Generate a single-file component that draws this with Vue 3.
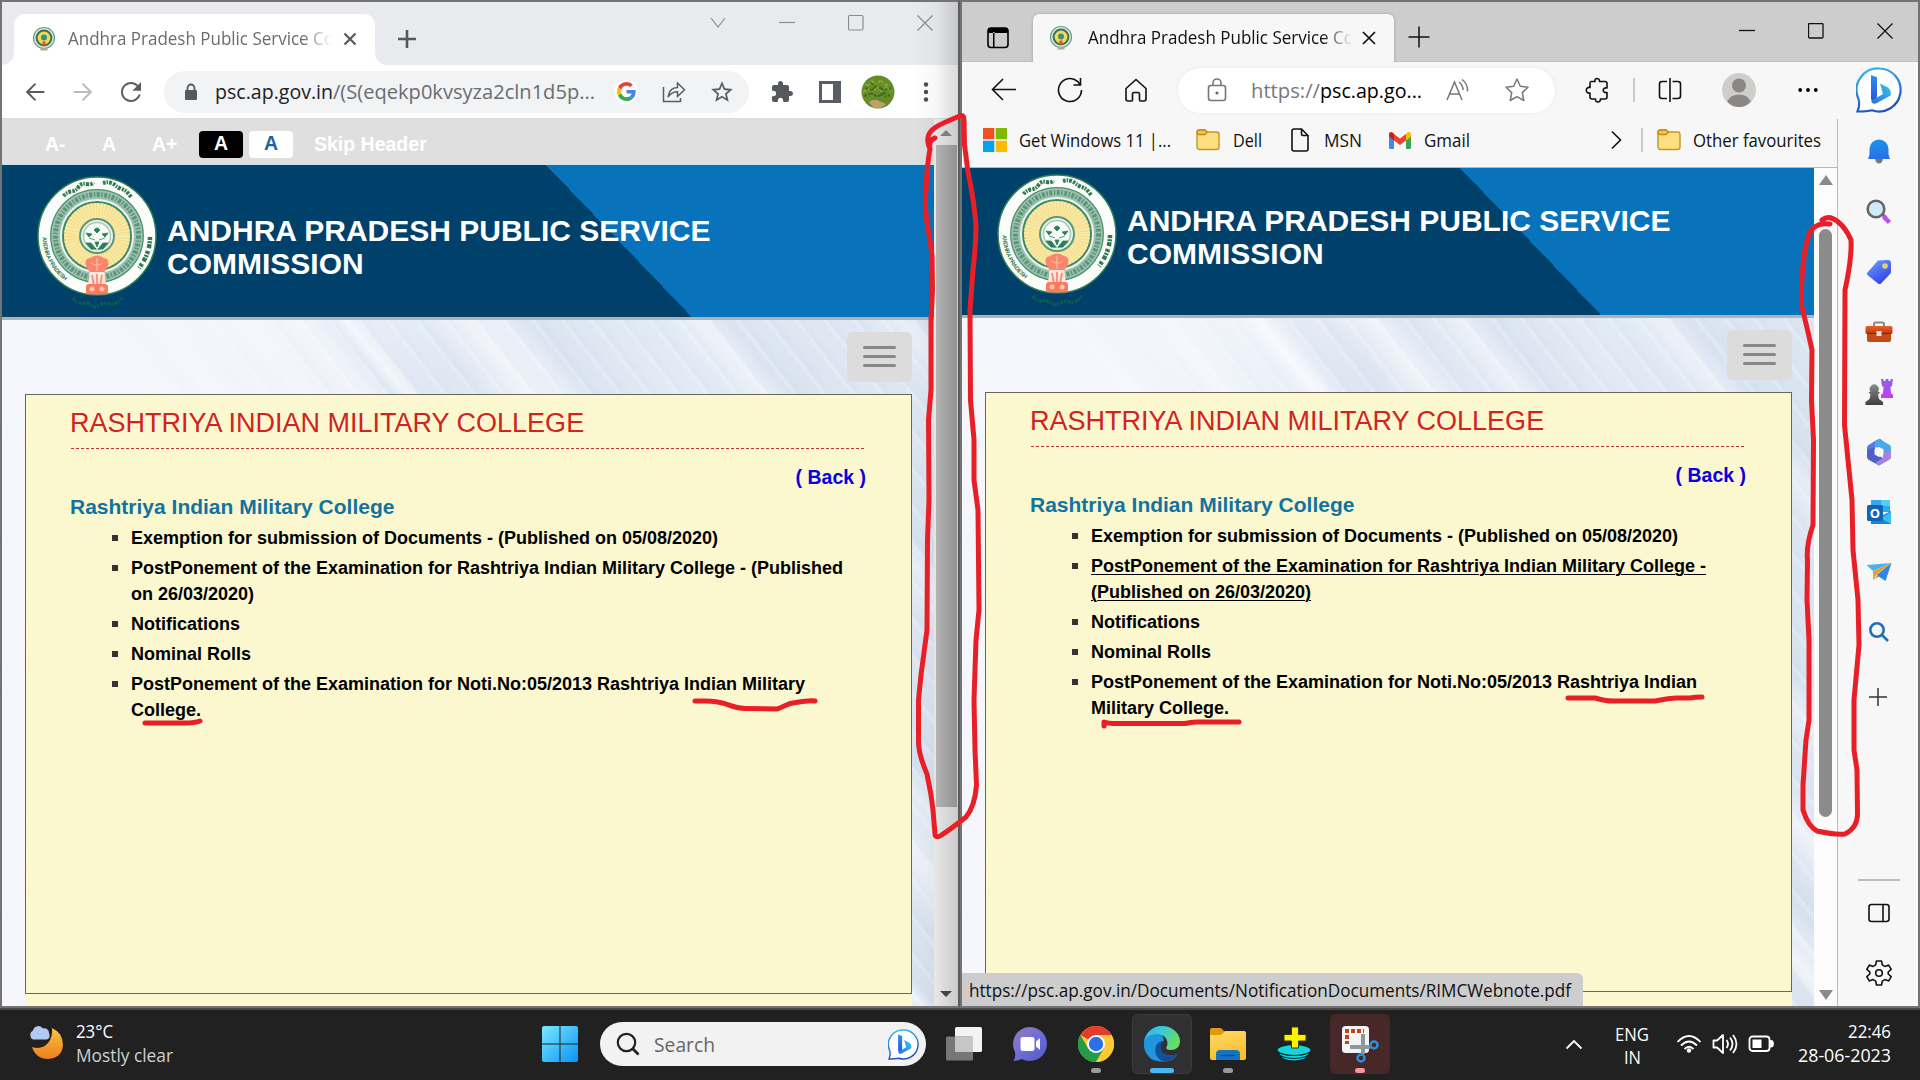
<script setup>
import { h } from 'vue'

// One line of text stretched to a fixed advance width
const Fit = (p) =>
  h('svg', { width: p.w, height: p.s * 1.5, overflow: 'visible' }, [
    h('text', { x: 0, y: p.s * 1.1, 'font-size': p.s, fill: 'currentColor', textLength: p.w, lengthAdjust: 'spacingAndGlyphs' }, p.t)
  ])
Fit.props = ['t', 'w', 's']

const wins = [
  {
    id: 'chrome',
    items: [
      ['Exemption for submission of Documents - (Published on 05/08/2020)'],
      ['PostPonement of the Examination for Rashtriya Indian Military College - (Published', 'on 26/03/2020)'],
      ['Notifications'],
      ['Nominal Rolls'],
      ['PostPonement of the Examination for Noti.No:05/2013 Rashtriya Indian Military', 'College.']
    ]
  },
  {
    id: 'edge',
    hover: 1,
    items: [
      ['Exemption for submission of Documents - (Published on 05/08/2020)'],
      ['PostPonement of the Examination for Rashtriya Indian Military College -', '(Published on 26/03/2020)'],
      ['Notifications'],
      ['Nominal Rolls'],
      ['PostPonement of the Examination for Noti.No:05/2013 Rashtriya Indian', 'Military College.']
    ]
  }
]
</script>

<template>
  <div class="desktop">
    <svg class="defs" width="0" height="0">
      <defs>
        <linearGradient id="gBing" x1="0" y1="0" x2="0.3" y2="1"><stop offset="0" stop-color="#35c0ef" /><stop offset="1" stop-color="#2150c4" /></linearGradient>
        <linearGradient id="gB2" x1="0" y1="0" x2="0" y2="1"><stop offset="0" stop-color="#2f8df0" /><stop offset="1" stop-color="#2456d8" /></linearGradient>
        <linearGradient id="gB3" x1="1" y1="0" x2="0" y2="1"><stop offset="0" stop-color="#35c8e8" /><stop offset="1" stop-color="#2a6fe0" /></linearGradient>
        <linearGradient id="gWin" gradientUnits="userSpaceOnUse" x1="0" y1="0" x2="36" y2="36"><stop offset="0" stop-color="#7be9ff" /><stop offset="1" stop-color="#0a93f5" /></linearGradient>
        <linearGradient id="gMoon" x1="0" y1="0" x2="0" y2="1"><stop offset="0" stop-color="#f6c443" /><stop offset="1" stop-color="#f07f1c" /></linearGradient>
        <linearGradient id="gTag" x1="0" y1="0" x2="0.6" y2="1"><stop offset="0" stop-color="#6ba6f5" /><stop offset="1" stop-color="#3341f0" /></linearGradient>
        <linearGradient id="gChat" x1="0" y1="0" x2="1" y2="1"><stop offset="0" stop-color="#9c78c0" /><stop offset="0.5" stop-color="#6c6fd8" /><stop offset="1" stop-color="#5157c4" /></linearGradient>
        <linearGradient id="gEdge" x1="0" y1="0.2" x2="1" y2="0.5"><stop offset="0" stop-color="#31b4ea" /><stop offset="0.5" stop-color="#3fcbd0" /><stop offset="1" stop-color="#6bdf55" /></linearGradient>
        <linearGradient id="gFold" x1="0" y1="0" x2="0.3" y2="1"><stop offset="0" stop-color="#ffd968" /><stop offset="1" stop-color="#f9bf2c" /></linearGradient>
        <linearGradient id="gBox" x1="0" y1="0" x2="0" y2="1"><stop offset="0" stop-color="#e8612c" /><stop offset="1" stop-color="#b93a0c" /></linearGradient>
        <linearGradient id="gRook" x1="0" y1="0" x2="0" y2="1"><stop offset="0" stop-color="#8d62e8" /><stop offset="1" stop-color="#c43cf5" /></linearGradient>
        <linearGradient id="gPawn" x1="0" y1="0" x2="0" y2="1"><stop offset="0" stop-color="#8a8a8a" /><stop offset="1" stop-color="#3f3f3f" /></linearGradient>
        <linearGradient id="gBell" x1="0" y1="0" x2="0" y2="1"><stop offset="0" stop-color="#1b93ea" /><stop offset="1" stop-color="#2b6fe8" /></linearGradient>
        <symbol id="seal" viewBox="0 0 124 138">
          <circle cx="62" cy="62" r="59" fill="#fbfdfb" stroke="#2c7f57" stroke-width="1.500" />
          <circle cx="62" cy="62" r="41" fill="none" stroke="#9dc1ae" stroke-width="11" />
          <circle cx="62" cy="62" r="46.300" fill="none" stroke="#4c9070" stroke-width="1.200" />
          <circle cx="62" cy="62" r="41.500" fill="none" stroke="#5b977a" stroke-width="5" stroke-dasharray="3 1.500 1.500 1.500" />
          <circle cx="62" cy="62" r="36" fill="none" stroke="#eef5f0" stroke-width="2" />
          <circle cx="62" cy="62" r="34" fill="#f6e08c" stroke="#3f8a66" stroke-width="2" />
          <circle cx="62" cy="62" r="25" fill="none" stroke="#fbf0bd" stroke-width="16" stroke-dasharray="1.100 1.700" opacity="0.8" />
          <circle cx="62" cy="62" r="17" fill="#e9f3ec" stroke="#5b997a" stroke-width="2" />
          <circle cx="62" cy="62" r="13.500" fill="#f7fbf8" stroke="#a8c9b5" stroke-width="1.500" />
          <path d="M59 56q3-4 6 0l-3 3zM51 59l6 1-3 3zM73 59l-6 1 3 3zM54 64l6 2M70 64l-6 2M51 69h5l5 6h-5zM73 69h-5l-5 6h5zM60 68h4l-2 5z" fill="#2f7d57" stroke="#2f7d57" stroke-width=".8" />
          <path d="M28.500 22q3.500-4 8-4.500t7-4.500 8-3 7-1.500M68 9q7-2 12 2t8 4.500 8 7.500" fill="none" stroke="#327a53" stroke-width="4" stroke-dasharray="2.500 1 1.500 1 3 1.200" />
          <path id="sealArc" d="M7.500 63A54.500 54.500 0 0 0 34 109" fill="none" />
          <text font-size="5.800" font-weight="bold" fill="#2f7a54" font-family="Liberation Sans, sans-serif"><textPath href="#sealArc" textLength="51">ANDHRA PRADESH</textPath></text>
          <path d="M115 63q0 17-11 31" fill="none" stroke="#327a53" stroke-width="4.500" stroke-dasharray="3 1.200 2 1 4 3" />
          <path d="M51 92q-2-7 4-8 7-5 14 0 6 1 4 8l-4 7H55z" fill="#fb866c" />
          <path d="M54.500 98h15l2 18h-19z" fill="#ffe6de" />
          <path d="M57 101l2 11M62 100v12M67 101l-2 11" stroke="#fb8c73" stroke-width="1.800" />
          <rect x="51" y="110" width="22" height="10.500" rx="3" fill="#fc7a5c" /><circle cx="57" cy="115" r="2.500" fill="#ffc6b8" /><circle cx="67" cy="115" r="2.500" fill="#ffc6b8" />
          <path d="M56 89q6 4 12 0M62 84v13" stroke="#ffb3a1" stroke-width="1.300" fill="none" />
          <path d="M38 124q4 6 9 5t9 2 9 0 10-1 12-6" fill="none" stroke="#0d5c4c" stroke-width="3.200" stroke-dasharray="3 1 2 1.500" />
        </symbol>
        <symbol id="seal-mini" viewBox="0 0 24 26">
          <circle cx="12" cy="12" r="10.500" fill="#dfeae2" stroke="#6c9d82" stroke-width="1.200" />
          <circle cx="12" cy="12" r="7.400" fill="#f0d95c" stroke="#3a7452" stroke-width="2" />
          <circle cx="12" cy="11.500" r="3" fill="#3f8f78" />
          <path d="M10.500 15.500h3v4h-3z" fill="#f04a22" /><path d="M8.500 22h7v2.500h-7z" fill="#b3a894" />
        </symbol>
        <symbol id="bing" viewBox="0 0 46 46">
          <path d="M23 1.500a21.500 21.500 0 1 1-7 41.800C11 44.500 6 44.500 1.500 44.500c2-5 2.500-8 .800-13A21.500 21.500 0 0 1 23 1.500z" fill="#fff" stroke="url(#gBing)" stroke-width="2.200" />
          <path d="M15 8l6 2.300V29l-1 7-5-3.500z" fill="url(#gB2)" />
          <path d="M24 16.500l7 3.500c3.500 2 4.500 5 3.500 8.500L21 36c-3 1.500-5 .5-6-2l12-7z" fill="url(#gB3)" />
        </symbol>
        <symbol id="folder" viewBox="0 0 24 24">
          <path d="M1 6v13a2.500 2.500 0 0 0 2.500 2.500h17A2.500 2.500 0 0 0 23 19V6.500A2.500 2.500 0 0 0 20.500 4H11L9 2H3a2 2 0 0 0-2 2z" fill="#fddf82" stroke="#c19623" stroke-width="1.400" />
          <path d="M1 5a2.500 2.500 0 0 1 2.500-3H9l2.300 2L9 6.500H3A2 2 0 0 1 1 5z" fill="#fbc83a" stroke="#b98a1c" stroke-width="1.300" />
        </symbol>
      </defs>
    </svg>

    <div class="windows">
      <section v-for="w in wins" :key="w.id" class="window" :class="w.id">
        <!-- Chrome -->
        <template v-if="w.id === 'chrome'">
          <div class="c-strip">
            <div class="c-tab">
              <svg width="24" height="26"><use href="#seal-mini" /></svg>
              <div class="tab-title"><Fit t="Andhra Pradesh Public Service Co" :w="266" :s="18" /></div>
              <svg width="14" height="14" viewBox="0 0 14 14"><path d="M1.500 1.500l11 11m0-11l-11 11" stroke="#55585c" stroke-width="2.200" /></svg>
            </div>
            <svg class="c-plus" width="18" height="18" viewBox="0 0 18 18"><path d="M9 0v18M0 9h18" stroke="#55585c" stroke-width="2.600" /></svg>
            <div class="c-controls">
              <svg width="16" height="16"><path d="M1 3l7 9 7-9" /></svg>
              <svg width="16" height="16"><path d="M0 7.500h16" /></svg>
              <svg width="16" height="16"><rect x=".5" y=".5" width="14.500" height="14.500" rx="1.500" /></svg>
              <svg width="16" height="16"><path d="M.5.5l15 15m0-15l-15 15" /></svg>
            </div>
          </div>
          <div class="c-bar">
            <svg width="28" height="28" viewBox="0 0 24 24" fill="#5a5d61"><path d="M20 11.100H7.400l5.600-5.700L11.900 4.200 4 12l7.900 7.800 1.100-1.200-5.600-5.700H20z" /></svg>
            <svg width="28" height="28" viewBox="0 0 24 24" fill="#b9bbbe"><path d="M4 11.100h12.600L11 5.400l1.100-1.200L20 12l-7.900 7.800-1.100-1.200 5.600-5.700H4z" /></svg>
            <svg width="30" height="30" viewBox="0 0 24 24" fill="#5a5d61"><path d="M17.650 6.350C16.200 4.900 14.210 4 12 4c-4.420 0-7.990 3.580-7.990 8s3.570 8 7.990 8c3.730 0 6.840-2.550 7.730-6h-1.700c-.9 2.500-3.200 4.400-6.030 4.400-3.500 0-6.400-2.900-6.400-6.400s2.900-6.400 6.400-6.400c1.800 0 3.300.75 4.500 1.900L13 11h7V4l-2.350 2.350z" /></svg>
            <div class="c-omni">
              <svg width="14" height="18" viewBox="0 0 14 18"><path d="M3.500 8V5a3.500 3.500 0 0 1 7 0v3" fill="none" stroke="#55585c" stroke-width="1.800" /><rect x="1" y="7" width="12" height="10" rx="1.300" fill="#55585c" /></svg>
              <div class="url"><Fit class="dark" t="psc.ap.gov.in" :w="118" :s="20.500" /><Fit class="grey" t="/(S(eqekp0kvsyza2cln1d5p..." :w="262" :s="20.500" /></div>
              <div class="g"><svg width="19" height="19" viewBox="0 0 48 48"><path fill="#EA4335" d="M24 9.500c3.540 0 6.710 1.220 9.210 3.600l6.850-6.850C35.900 2.380 30.470 0 24 0 14.620 0 6.510 5.380 2.560 13.220l7.980 6.190C12.430 13.720 17.740 9.500 24 9.500z" /><path fill="#4285F4" d="M46.980 24.550c0-1.570-.15-3.090-.38-4.550H24v9.020h12.940c-.58 2.960-2.260 5.480-4.780 7.180l7.730 6c4.510-4.180 7.090-10.360 7.090-17.650z" /><path fill="#FBBC05" d="M10.530 28.590A14.500 14.500 0 0 1 9.770 24c0-1.600.27-3.140.76-4.590l-7.980-6.190A24 24 0 0 0 0 24c0 3.880.92 7.540 2.560 10.780l7.970-6.190z" /><path fill="#34A853" d="M24 48c6.480 0 11.930-2.130 15.890-5.810l-7.730-6c-2.150 1.450-4.920 2.300-8.160 2.300-6.260 0-11.570-4.220-13.470-9.910l-7.980 6.190C6.510 42.620 14.620 48 24 48z" /></svg></div>
              <svg width="24" height="24" viewBox="0 0 24 24" fill="none" stroke="#5a5d61" stroke-width="1.500"><path d="M1.500 7v14.500h17V18" /><path d="M6 17c1-6.500 4-9.500 9.500-9.500V3l7 6.800-7 6.700v-4.700C11 11.800 8.500 13.500 6 17z" /></svg>
              <svg width="26" height="26" viewBox="0 0 24 24" fill="#5a5d61"><path d="M22 9.240l-7.190-.62L12 2 9.190 8.630 2 9.240l5.460 4.730L5.820 21 12 17.270 18.180 21l-1.630-7.030L22 9.240zM12 15.400l-3.760 2.270 1-4.280-3.320-2.880 4.380-.38L12 6.100l1.710 4.040 4.380.38-3.320 2.880 1 4.280L12 15.400z" /></svg>
            </div>
            <svg width="24" height="24" viewBox="0 0 24 24" fill="#55585c"><path d="M20.500 11H19V7c0-1.100-.9-2-2-2h-4V3.500C13 2.120 11.880 1 10.500 1S8 2.120 8 3.500V5H4c-1.100 0-1.990.9-1.990 2v3.800H3.500c1.490 0 2.700 1.210 2.700 2.700s-1.210 2.700-2.700 2.700H2V20c0 1.100.9 2 2 2h3.800v-1.500c0-1.490 1.210-2.700 2.700-2.700 1.490 0 2.700 1.210 2.700 2.700V22H17c1.100 0 2-.9 2-2v-4h1.500c1.380 0 2.500-1.120 2.500-2.500S21.880 11 20.500 11z" /></svg>
            <svg width="22" height="22" viewBox="0 0 22 22"><path d="M0 0h22v22H0z" fill="#5a5d65" /><path d="M3 3h11v16H3z" fill="#fff" /></svg>
            <svg width="34" height="34" viewBox="0 0 34 34"><circle cx="17" cy="17" r="16.500" fill="#658c26" /><g fill="none" stroke-width="2"><path d="M4 9l4 2 3-5 4 4 5-5 4 5 5-1M2 17l5-3 4 4 5-6 4 4 6-4 5 5" stroke="#87a838" stroke-dasharray="4 1.500 2 2" /><path d="M4 13l7 2 4-4 8 4 7-2M3 21l8-3 5 4 7-4 6 3M10 8l4 4M20 18l5 4" stroke="#45691a" stroke-dasharray="3 2 5 1" /></g><path d="M8 27q5-4 10-1l7 3q-4 4-9 4.500-5-1-8-6.500z" fill="#bf9f70" /></svg>
            <svg width="6" height="22" viewBox="0 0 6 22" fill="#4a4d51"><circle cx="3" cy="3.500" r="2.200" /><circle cx="3" cy="11" r="2.200" /><circle cx="3" cy="18.500" r="2.200" /></svg>
          </div>
        </template>

        <!-- Edge -->
        <template v-else>
          <div class="e-strip">
            <svg class="e-wsp" width="22" height="22" viewBox="0 0 22 22"><rect x="1" y="1" width="20" height="19.500" rx="3" fill="none" stroke="#000" stroke-width="1.600" /><path d="M1 6V4q0-3 3-3h14q3 0 3 3v2zM6 5v15h1.500V5z" /></svg>
            <div class="e-tab">
              <svg width="24" height="26"><use href="#seal-mini" /></svg>
              <div class="tab-title"><Fit t="Andhra Pradesh Public Service Co" :w="266" :s="18" /></div>
              <svg width="14" height="14" viewBox="0 0 14 14"><path d="M1 1l12 12m0-12L1 13" stroke="#111" stroke-width="1.700" /></svg>
            </div>
            <svg class="e-plus" width="22" height="22" viewBox="0 0 22 22"><path d="M11 0.500v21M.5 11h21" stroke="#111" stroke-width="1.500" /></svg>
            <div class="e-controls">
              <svg width="16" height="16"><path d="M0 7.500h16" /></svg>
              <svg width="16" height="16"><rect x=".5" y=".5" width="14.500" height="14.500" rx="1" /></svg>
              <svg width="16" height="16"><path d="M.5.5l15 15m0-15l-15 15" /></svg>
            </div>
          </div>
          <div class="e-bar">
            <svg width="26" height="24" viewBox="0 0 26 24" class="ln"><path d="M25 11.500H1.500M12 1L1.500 11.500 12 22" /></svg>
            <svg width="26" height="26" viewBox="0 0 26 26" class="ln"><path d="M24.500 13A11.500 11.500 0 1 1 20.500 4.300L23.500 8M23.500 1v7h-7" /></svg>
            <svg width="24" height="24" viewBox="0 0 24 24" class="ln"><path d="M2 10.500L12 1.500l10 9V21q0 2-2 2h-3.500q-1 0-1-1v-6q0-1.500-1.500-1.500h-4Q8.500 14.500 8.500 16v6q0 1-1 1H4q-2 0-2-2z" /></svg>
            <div class="e-addr">
              <svg width="20" height="24" viewBox="0 0 20 24" fill="none" stroke="#777" stroke-width="1.600"><rect x="1.500" y="7.500" width="17" height="15" rx="2.500" /><path d="M6 7.500V5a4 4 0 0 1 8 0v2.500" /><circle cx="10" cy="15" r="1.600" fill="#666" stroke="none" /></svg>
              <div class="url"><Fit class="grey2" t="https://" :w="69" :s="20.500" /><Fit t="psc.ap.go..." :w="102" :s="20.500" /></div>
              <svg width="24" height="24" viewBox="0 0 24 24" fill="none" stroke="#777" stroke-width="1.500"><path d="M1 22L8.500 4 16 22M3.500 16h10M13 4q4 3 4 8M16 1.500q6 4 5.500 12" /></svg>
              <svg width="26" height="26" viewBox="0 0 26 26" fill="none" stroke="#777" stroke-width="1.500"><path d="M13 2l3.300 7.300 7.700.9-5.700 5.400 1.500 7.900L13 19.600l-6.800 3.900 1.500-7.900L2 10.200l7.700-.9z" stroke-linejoin="round" /></svg>
            </div>
            <svg width="24" height="26" viewBox="0 0 24 26" class="ln"><path d="M6 4.500h4C9 .5 15 .5 14.500 4.500H20q2 0 2 2V11c-5-1-5 5.500 0 4.500V20q0 2-2 2h-4.500c0 4-5.500 4-5 0H7q-2 0-2-2v-4C0 17 0 9.500 5 10.500v-4Q5 4.500 6 4.500z" stroke-linejoin="round" /></svg>
            <i class="vline"></i>
            <svg width="24" height="24" viewBox="0 0 24 24" class="ln"><path d="M9 3.500H4Q1.500 3.500 1.500 6v12q0 2.500 2.500 2.500h5M14.500 3.500H20q2.500 0 2.500 2.500v12q0 2.500-2.500 2.500h-5.500M12 0v24" /></svg>
            <svg width="34" height="34" viewBox="0 0 34 34"><circle cx="17" cy="17" r="17" fill="#d0cecb" /><circle cx="17" cy="12.500" r="7" fill="#8a8784" /><path d="M5 28.500Q9 21.500 17 21.500t12 7Q24 34 17 34T5 28.500z" fill="#8a8784" /></svg>
            <svg width="20" height="6" viewBox="0 0 20 6"><circle cx="2.200" cy="3" r="1.900" /><circle cx="10" cy="3" r="1.900" /><circle cx="17.800" cy="3" r="1.900" /></svg>
            <svg width="46" height="46"><use href="#bing" /></svg>
          </div>
        </template>

        <div class="below">
          <div class="main">
            <div v-if="w.hover" class="favs">
              <svg width="24" height="24"><path d="M0 0h11.300v11.300H0z" fill="#f25022" /><path d="M12.700 0H24v11.300H12.700z" fill="#7fba00" /><path d="M0 12.700h11.300V24H0z" fill="#00a4ef" /><path d="M12.700 12.700H24V24H12.700z" fill="#ffb900" /></svg>
              <Fit t="Get Windows 11 |..." :w="152" :s="18" />
              <svg width="24" height="24"><use href="#folder" /></svg>
              <Fit t="Dell" :w="29" :s="18" />
              <svg width="18" height="24" viewBox="0 0 18 24" fill="none" stroke="#111" stroke-width="1.600"><path d="M10.500 1H3Q1 1 1 3v18q0 2 2 2h12q2 0 2-2V7.500zV6q0 1.500 1.500 1.500H17" /></svg>
              <Fit t="MSN" :w="38" :s="18" />
              <svg width="22" height="17" viewBox="0 0 22 17"><path d="M0 4v11.500Q0 17 1.500 17H5V7z" fill="#4285f4" /><path d="M22 4v11.500q0 1.500-1.500 1.500H17V7z" fill="#34a853" /><path d="M5 2l6 4.600L17 2v6.500l-6 4.600-6-4.600z" fill="#ea4335" /><path d="M0 4V2.500C0 0 2.500-.5 4 .8L5 2v6.500L0 4.500z" fill="#c5221f" /><path d="M22 4V2.500c0-2.500-2.500-3-4-1.700L17 2v6.500l5-4z" fill="#fbbc04" /></svg>
              <Fit t="Gmail" :w="46" :s="18" />
              <svg width="11" height="20" viewBox="0 0 11 20" class="ln"><path d="M1 1.500L9.500 10 1 18.500" /></svg>
              <i class="vline"></i>
              <svg width="24" height="24"><use href="#folder" /></svg>
              <Fit t="Other favourites" :w="128" :s="18" />
            </div>
            <div class="page">
              <div class="content">
                <div v-if="!w.hover" class="access">
                  <span>A-</span><span>A</span><span>A+</span><b class="blk">A</b><b class="wht">A</b><span class="skip">Skip Header</span>
                </div>
                <header class="hero">
                  <svg class="seal" width="124" height="138"><use href="#seal" /></svg>
                  <h1>ANDHRA PRADESH PUBLIC SERVICE<br />COMMISSION</h1>
                </header>
                <div class="area">
                  <div class="burger"><i></i><i></i><i></i></div>
                  <div class="panel">
                    <h2>RASHTRIYA INDIAN MILITARY COLLEGE</h2>
                    <div class="dash"></div>
                    <a class="back">( Back )</a>
                    <h3>Rashtriya Indian Military College</h3>
                    <ul>
                      <li v-for="(it, i) in w.items" :key="i" :class="{ under: w.hover === i }">
                        <div><span v-for="l in it" :key="l">{{ l }}</span></div>
                      </li>
                    </ul>
                  </div>
                  <div class="next"></div>
                </div>
              </div>
              <div class="scroll">
                <svg class="up" viewBox="0 0 14 11" preserveAspectRatio="none"><path d="M7 0l7 11H0z" /></svg>
                <div class="thumb"></div>
                <svg class="down" viewBox="0 0 14 11" preserveAspectRatio="none"><path d="M7 11l7-11H0z" /></svg>
              </div>
            </div>
          </div>
          <aside v-if="w.hover" class="side">
            <div><svg width="24" height="26" viewBox="0 0 24 26"><path d="M8 20h8q-1 4.500-4 4.500T8 20z" fill="#777" /><path d="M2.500 10a9.500 9.500 0 0 1 19 0v5.500l1.500 4.500H1l1.500-4.500z" fill="url(#gBell)" /></svg></div>
            <div><svg width="26" height="26" viewBox="0 0 26 26"><path d="M16.500 15.500l4 3.500" stroke="#777" stroke-width="3" /><path d="M17.500 17.500l6 6" stroke="#bd4ef2" stroke-width="4.500" /><circle cx="10" cy="10" r="8.300" fill="#cfeafb" stroke="#666" stroke-width="2.600" /></svg></div>
            <div><svg width="26" height="26" viewBox="0 0 26 26"><path d="M12 1.500L22 1q3 0 3 3v9q0 1-1 2l-9 9.500q-1.500 1-3 0l-10-8q-2-1.500-.5-3z" fill="url(#gTag)" /><circle cx="19" cy="7" r="2.800" fill="#e6cf62" /></svg></div>
            <div><svg width="28" height="22" viewBox="0 0 28 22"><path d="M9 6V3q0-1.500 1.500-1.500h7Q19 1.500 19 3v3" fill="none" stroke="#8b8b8b" stroke-width="2" /><rect x=".5" y="5" width="27" height="8" rx="1.500" fill="url(#gBox)" /><path d="M2 13h24v6q0 2-2 2H4q-2 0-2-2z" fill="#c44a1a" /><path d="M2 12.500h24" stroke="#7d2608" /><rect x="11.500" y="10" width="5" height="5" fill="#ddd" /></svg></div>
            <div><svg width="28" height="28" viewBox="0 0 28 28"><path d="M16 1h2.500v2h2V1h3v2h2V1H28l-1 7-1.500 1 .5 6 2 2v3H16v-3l2-2 .5-6L17 8z" fill="url(#gRook)" /><path d="M5.500 13.500a4.500 4.500 0 1 1 7.500 0l2 1-2 2 1 4.500 4 3v3H.5v-3l4-3 1-4.500-2-2z" fill="url(#gPawn)" /></svg></div>
            <div><svg width="26" height="28" viewBox="0 0 26 28"><path d="M13 1L9 3 2.500 7Q1 8 1 10v8l8-4V9l9-5-3.500-3z" fill="#5a78e8" /><path d="M13 1l10 5.500q2 1 2 3V15l-8 2V11l-8-2V4z" fill="#4aa9e8" /><path d="M25 13v6q0 2-2 3l-10 5.500L9 25l8-5v-6z" fill="#a57dd8" /><path d="M1 12v7q0 2 2 3l10 5.500 4-7.500-8-4V9z" fill="#5060c8" /><path d="M13 27.500L25 20v-8l-8 5v3l-8 5z" fill="#a783db" /><path d="M13 9l4.500 2.500v5L13 19l-4.500-2.500v-5z" fill="#f7f7f7" /></svg></div>
            <div><svg width="26" height="26" viewBox="0 0 26 26"><path d="M5 1h19v12H5z" fill="#35a8ea" /><path d="M15 1h9v6h-9z" fill="#55cdf5" /><path d="M5 14l10 3 10-5v13H5z" fill="#1784d8" /><path d="M14 19l11-6v12z" fill="#3dbdf2" /><rect x="1" y="6" width="16" height="16" rx="1.500" fill="#0f66b8" /><text x="3.700" y="18.500" font-size="13" font-weight="bold" fill="#fff">O</text></svg></div>
            <div><svg width="26" height="22" viewBox="0 0 26 22"><path d="M25.500 2L.5 4 7 10z" fill="#4ab0ee" /><path d="M25.500 2L7 10v9l4-6z" fill="#e6a02c" /><path d="M25.500 2L7 19l5-3z" fill="#b87818" /><path d="M25.500 2L10.500 14l9 6z" fill="#2f86e4" /></svg></div>
            <div><svg width="22" height="22" viewBox="0 0 22 22" fill="none" stroke="#1f6fc0" stroke-width="2.600"><circle cx="9" cy="9" r="6.700" /><path d="M14 14l6 6" /></svg></div>
            <div class="add"><svg width="18" height="18" viewBox="0 0 18 18"><path d="M9 0v18M0 9h18" stroke="#333" stroke-width="1.500" /></svg></div>
            <div class="rule"></div>
            <div><svg width="22" height="20" viewBox="0 0 22 20" class="ln"><rect x="1" y="1.500" width="20" height="17" rx="2.500" /><path d="M15 2v16" /></svg></div>
            <div><svg width="28" height="28" viewBox="0 0 28 28" class="ln" stroke-linejoin="round"><circle cx="14" cy="14" r="3.300" /><path d="M11.500 2h5l.8 3.900 2.600 1.500 3.800-1.300 2.500 4.300-3 2.600v2l3 2.600-2.500 4.300-3.800-1.300-2.600 1.500-.8 3.900h-5l-.8-3.900-2.600-1.500-3.800 1.300-2.500-4.300 3-2.600v-2l-3-2.600 2.500-4.300 3.800 1.300 2.600-1.500z" /></svg></div>
          </aside>
        </div>
        <div v-if="!w.hover" class="shade"></div>
        <div v-else class="status"><Fit t="https://psc.ap.gov.in/Documents/NotificationDocuments/RIMCWebnote.pdf" :w="602" :s="18.500" /></div>
      </section>
    </div>

    <footer class="task">
      <div class="weather">
        <svg width="36" height="36" viewBox="0 0 36 36"><path d="M24 4q11 5 11 17-1 13-15 14-12 0-16-12 10 3 16-4 5-6 4-15z" fill="url(#gMoon)" /><path d="M5 15.500a5 5 0 0 1 0-9 5.500 5.500 0 0 1 10-2 4.500 4.500 0 0 1 6 4.500q2 5-2 6.500z" fill="#b3cbf3" /></svg>
        <div><Fit t="23°C" :w="37" :s="18" /><Fit class="dim" t="Mostly clear" :w="97" :s="18" /></div>
      </div>
      <svg class="start" width="36" height="36" viewBox="0 0 36 36" fill="url(#gWin)"><path d="M2 0h15.500v17.500H0V2Q0 0 2 0zM18.500 0H34q2 0 2 2v15.500H18.500zM0 18.500h17.500V36H2q-2 0-2-2zM18.500 18.500H36V34q0 2-2 2H18.500z" /></svg>
      <div class="find">
        <svg width="24" height="24" viewBox="0 0 24 24" fill="none" stroke="#222" stroke-width="2.200"><circle cx="10.500" cy="10.500" r="8.700" /><path d="M16.500 16.500l6 6" stroke-width="2.800" /></svg>
        <Fit t="Search" :w="61" :s="20.500" />
        <svg width="31" height="31"><use href="#bing" /></svg>
      </div>
      <div class="apps">
        <div><svg width="36" height="34" viewBox="0 0 36 34"><rect x="9" y="0" width="27" height="25" rx="1.500" fill="#f2f2f2" /><rect x="0" y="9.500" width="27" height="24" rx="1.500" fill="#777" /><path d="M9 9.500h18V25H9z" fill="#c6c6c6" /></svg></div>
        <div><svg width="36" height="36" viewBox="0 0 36 36"><path d="M18 1a17 17 0 1 1-8 32Q5 35 1.500 35 4 31 3 26A17 17 0 0 1 18 1z" fill="url(#gChat)" /><rect x="8.500" y="11" width="14" height="14" rx="2.500" fill="#fff" /><path d="M24 15.500l4-3.500v12l-4-3.500z" fill="#fff" /></svg></div>
        <div><svg width="36" height="36" viewBox="0 0 36 36"><circle cx="18" cy="18" r="18" fill="#fcc934" /><path d="M18 18L2.400 9A18 18 0 0 1 33.600 9H18z" fill="#e33b2e" /><path d="M2.400 9A18 18 0 0 0 18 36l8-13.500H10.200z" fill="#259b49" /><path d="M18 36a18 18 0 0 0 15.600-27H18l8 13.500z" fill="#fcc934" /><circle cx="18" cy="18" r="9" fill="#fff" /><circle cx="18" cy="18" r="7.200" fill="#2b6fe8" /></svg><i></i></div>
        <div class="on"><svg width="36" height="36" viewBox="0 0 36 36"><path d="M18 0C8 0 0 8 0 18q0 8 6 13c5 4 12 6 19 4 4-1 7-4 8-7-10 4-17-1-17-8 0-3 2-5 3-6z" fill="#1b8ad8" /><path d="M0 16C2 9 8 7 13 8c6 1 8 5 6 8-9 3-8 12 0 18C9 38-1 29 0 16z" fill="#2196dc" /><path d="M12 20c-3 8 3 15 9 15.500 5 0 10-3.500 12-7.500-10 4-16-1-16-7 0-3 1-4 3-6-4 0-7 2-8 5z" fill="#124f96" /><path d="M0 15.500C2 6 9 0 18 0c11 0 18 8 18 15 0 6-4 9-9 9-4 0-6-1.500-4-4 1.500-3 0-12-10-12C7 8 2 11 0 15.500z" fill="url(#gEdge)" /></svg><i></i></div>
        <div><svg width="36" height="36" viewBox="0 0 36 36"><path d="M0 4q0-2 2-2h9l4 4v6H0z" fill="#dc9a0c" /><path d="M0 9h11l4-4h19q2 0 2 2v25q0 2-2 2H2q-2 0-2-2z" fill="url(#gFold)" /><path d="M6 34v-6q0-4 4-4h16q4 0 4 4v6z" fill="#1374c4" /><path d="M11 29.500h14" stroke="#0b4f93" stroke-width="1.500" /></svg><i></i></div>
        <div><svg width="36" height="36" viewBox="0 0 36 36"><g fill="#12d6dc" stroke="#02272a" stroke-width="1.200"><ellipse cx="18" cy="30.500" rx="13" ry="4.500" /><ellipse cx="18" cy="27.500" rx="15" ry="5" /><ellipse cx="18" cy="24" rx="17" ry="5.500" /></g><path d="M15.500 1h7v7.500H30V15h-7.500v7h-7v-7H8V8.500h7.500z" fill="#fff200" stroke="#3a3800" /></svg></div>
        <div class="snip"><svg width="38" height="38" viewBox="0 0 38 38"><rect x="1" y="1" width="27" height="27" rx="3.500" fill="#f3f3f3" /><path d="M4 6h19M6 10v9" fill="none" stroke="#c4421b" stroke-width="4" stroke-dasharray="4 2" /><path d="M9 22h20M22 9v20" stroke="#8d979e" stroke-width="4" /><circle cx="33" cy="20" r="3.500" fill="none" stroke="#2f8fd6" stroke-width="2.500" /><circle cx="20" cy="33" r="3.500" fill="none" stroke="#2f8fd6" stroke-width="2.500" /></svg><i></i></div>
      </div>
      <div class="tray">
        <svg class="tl" width="18" height="11" viewBox="0 0 18 11"><path d="M1.500 9.500L9 2l7.500 7.500" /></svg>
        <div class="lang"><Fit t="ENG" :w="34" :s="18" /><Fit t="IN" :w="17" :s="18" /></div>
        <svg class="tl" width="26" height="20" viewBox="0 0 26 20"><path d="M1.500 8q11.500-12 23 0M5 11.500q8-8 16 0M8.500 15q4.500-4.500 9 0" /><circle cx="13" cy="16.500" r="2.200" fill="#fff" stroke="none" /></svg>
        <svg class="tl" width="26" height="22" viewBox="0 0 26 22"><path d="M1.500 7.500H5L11 2v18l-6-5.500H1.500zM14.500 7q3 4 0 8M18 4.500q5 6.500 0 13M21 2q7 9 0 18" stroke-linejoin="round" /></svg>
        <svg class="tl" width="26" height="18" viewBox="0 0 26 18"><rect x="1.500" y="1.500" width="20" height="14.500" rx="3" /><path d="M4.500 4.500h9V13h-9z" fill="#fff" stroke="none" /><path d="M23 6v5.500q2 0 2-2.700T23 6z" fill="#fff" /></svg>
        <div class="clock"><Fit t="22:46" :w="43" :s="18" /><Fit t="28-06-2023" :w="93" :s="18" /></div>
      </div>
    </footer>

    <svg class="ink" width="1920" height="1080" viewBox="0 0 1920 1080">
      <path d="M935 138Q928 140 930 149Q926 140 929 134C933 126 948 121 961 115.500Q964 115 964 120L964.500 145L968 172Q974 200 976 225Q976 245 973 270L970 310L970.500 400L974 440L974 480L978 510L979 610L976 640L974 700L975 750L976.500 785Q975 806 966 817C956 825 948 831 940 836Q935 838 935 834L933 810L931 795L927 774Q918 753 918.500 740L918.500 700L921 675L927 630L927.500 540L929 500L928.500 420L931 390L931 320L932.500 290L932 255L928 228Q924 205 926 190Q927 165 930 149" />
      <path d="M1830 224Q1816 222 1810 232C1805 245 1801 270 1801.500 305L1808 332L1812 350L1811.500 400L1813.500 440L1813 525Q1806 545 1807.500 560L1807 600L1809 640L1809 720L1806 740L1803 785L1803 810Q1808 826 1817 831Q1835 835 1845 834Q1857 828 1857.500 815L1857 770L1854 750L1854 700L1859 645L1858 600L1853 550L1852 500L1848 460L1844.500 425L1845 290Q1852 258 1851 240C1845 226 1832 212 1822 220" />
      <path d="M695 701H705C728 701 730 708 745 708.500L777 709C785 707 786 703 796 702.500Q810 700 815 701M145 723H185Q195 723 200 721M1568 698H1595Q1605 701 1613 701H1655Q1670 698 1677 698H1690Q1695 697 1702 697M1104 726V722Q1110 724 1115 723.500H1185Q1192 721.500 1200 722H1239" />
    </svg>
  </div>
</template>

<style>
body { margin: 0; overflow: hidden; }
</style>

<style scoped>
.desktop { position: relative; width: 1920px; height: 1080px; overflow: hidden; display: flex; flex-direction: column; background: #212121; font-family: "Open Sans", "Noto Sans", sans-serif; }
.defs { position: absolute; }
.desktop *, .desktop { box-sizing: border-box; }
svg { display: block; flex: none; }
.windows { display: flex; height: 1010px; border-bottom: 2px solid #484848; }
.window { position: relative; width: 960px; height: 1008px; border: 2px solid #737373; display: flex; flex-direction: column; overflow: hidden; }
.chrome { border-right-color: #5c5c5c; background: #fff; }
.edge { background: #f7f7f7; }
.ln { fill: none; stroke: #111; stroke-width: 1.6; }

.c-strip { height: 63px; flex: none; background: #e8eaed; display: flex; align-items: flex-end; padding-left: 12px; }
.c-tab { position: relative; width: 361px; height: 51px; background: #fff; border-radius: 11px 11px 0 0; display: flex; align-items: center; padding: 0 17px 2px 18px; color: #6a6c70; }
.c-tab::before, .c-tab::after { content: ""; position: absolute; bottom: 0; width: 12px; height: 12px; }
.c-tab::before { left: -12px; background: radial-gradient(circle at 0 0, #e8eaed 11.500px, #fff 12px); }
.c-tab::after { right: -12px; background: radial-gradient(circle at 100% 0, #e8eaed 11.500px, #fff 12px); }
.tab-title { width: 264px; margin: 0 11px 0 12px; -webkit-mask: linear-gradient(90deg, #000 235px, transparent 264px); mask: linear-gradient(90deg, #000 235px, transparent 264px); }
.c-plus { margin: 0 0 17px 23px; }
.c-controls { margin: 0 25px 34px auto; display: flex; gap: 53px; fill: none; stroke: #8a8c8f; stroke-width: 1.200; }
.c-bar { height: 54px; flex: none; display: grid; grid-template-columns: 48px 48px 48px 9px 585px 9px 48px 48px 48px 48px; padding-left: 9px; align-items: center; justify-items: center; border-bottom: 1px solid #dcdcdc; }
.c-bar > :nth-child(4) { grid-column: 5; }
.c-bar > :nth-child(5) { grid-column: 7; }
.c-omni { width: 585px; height: 42px; border-radius: 21px; background: #f1f3f4; display: grid; grid-template-columns: 54px 384px 48px 48px 48px; align-items: center; justify-items: center; }
.url { display: flex; justify-self: start; }
.c-omni .url { margin-left: -3px; }
.dark { color: #202124; }
.grey { color: #6a6d71; }
.grey2 { color: #777; }
.g { width: 24px; height: 24px; border-radius: 50%; background: #fff; display: grid; place-items: center; }

.e-strip { height: 60px; flex: none; background: #cdcdcd; border-bottom: 1px solid #bdbdbd; display: flex; align-items: flex-end; padding-left: 25px; }
.e-wsp { margin-bottom: 12px; }
.e-tab { position: relative; width: 361px; height: 48px; margin: 0 0 -1px 24px; background: #f7f7f7; border-radius: 6px 6px 0 0; box-shadow: 0 0 3px rgba(0, 0, 0, .25); clip-path: inset(-4px -4px 0 -4px); display: flex; align-items: center; padding: 0 16px 1px 16px; color: #111; }
.e-tab .tab-title { margin-left: 15px; margin-right: 10px; }
.e-plus { margin: 0 0 13px 14px; }
.e-controls { margin: 0 25px 22px auto; display: flex; gap: 53px; fill: none; stroke: #111; stroke-width: 1.300; }
.e-bar { height: 57px; flex: none; padding: 0 0 1px 9px; display: grid; grid-template-columns: 66px 66px 66px 9px 377px 10px 66px 6px 66px 72px 66px 75px; align-items: center; justify-items: center; }
.e-bar > :nth-child(4) { grid-column: 5; }
.e-bar > :nth-child(5) { grid-column: 7; margin-right: 2px; }
.e-addr { width: 377px; height: 45px; border-radius: 23px; background: #fff; padding-left: 4px; display: grid; grid-template-columns: 70px 176px 60px 58px; align-items: center; justify-items: center; box-shadow: 0 0 5px rgba(0, 0, 0, .06); }
.e-addr .url { margin-left: -1px; }
.vline { width: 1.500px; height: 24px; background: #c9c9c9; }
.favs { height: 49px; flex: none; padding: 0 0 6px 21px; border-bottom: 1px solid #b8b8b8; display: grid; grid-template-columns: 36px 177px 37px 58px 33px 65px 35px 187px 30px 16px 36px 127px; align-items: center; justify-items: start; color: #111; }

.below { flex: 1; display: flex; min-height: 0; }
.main { flex: 1; display: flex; flex-direction: column; min-width: 0; }
.page { flex: 1; display: flex; min-height: 0; font-family: "Liberation Sans", Arial, sans-serif; }
.content { flex: 1; display: flex; flex-direction: column; min-width: 0; }
.access { height: 46px; flex: none; background: #dfdfdf; border-bottom: 1px solid #cfe3ef; display: grid; grid-template-columns: 57px 50px 56px 44px 6px 44px 21px auto; padding: 5px 0 0 43px; justify-content: start; align-items: center; font-size: 19.500px; font-weight: bold; color: #fff; line-height: 27px; }
.access b { text-align: center; width: 44px; height: 27px; border-radius: 4px; margin: 1px 0 0 -9px; line-height: 25px; }
.access .blk { background: #000; color: #fff; grid-column: 4; }
.access .wht { background: #fff; color: #1c62a5; grid-column: 6; }
.access .skip { grid-column: 8; margin-left: -9px; }
.hero { height: 155px; flex: none; border-bottom: 3px solid #b0b2b6; display: flex; align-items: flex-start; padding-left: 33px; background: conic-gradient(from 136.200deg at 544px 0, #00416b 0 180deg, #0873ba 180deg 360deg); }
.hero .seal { margin-top: 9px; }
.hero h1 { margin: 0 0 0 8px; padding-top: 49px; font-size: 30px; line-height: 33px; font-weight: bold; color: #fff; white-space: nowrap; }
.edge .hero { height: 150px; background: conic-gradient(from 136.200deg at 498px 0, #00416b 0 180deg, #0873ba 180deg 360deg); }
.edge .seal { margin-top: 4px; }
.edge h1 { padding-top: 36px; }

.area { flex: 1; min-height: 0; padding: 12px 22px 0 23px; display: flex; flex-direction: column;
  background:
    linear-gradient(90deg, rgba(245,247,252,.9) 0, rgba(245,247,252,.75) 20%, rgba(245,247,252,0) 48%),
    linear-gradient(50deg, transparent 47%, rgba(255,255,255,.55) 48%, transparent 50%, transparent 53%, rgba(255,255,255,.4) 54.500%, transparent 56%, transparent 60%, rgba(255,255,255,.6) 61%, transparent 62%, transparent 66%, rgba(255,255,255,.5) 69%, transparent 71%),
    repeating-linear-gradient(52deg, rgba(255,255,255,0) 0 9px, rgba(255,255,255,.22) 13px, rgba(190,205,228,.1) 16px, rgba(255,255,255,0) 23px),
    repeating-linear-gradient(49deg, rgba(255,255,255,0) 0 40px, rgba(255,255,255,.38) 72px, rgba(178,197,226,.13) 90px, rgba(255,255,255,0) 151px),
    linear-gradient(90deg, #f3f5fb 0, #eff3fa 25%, #dfe7f2 50%, #e2eaf4 75%, #dbe5f1 100%); }
.burger { align-self: flex-end; width: 65px; height: 50px; flex: none; border-radius: 6px; background: #dcdcdc; display: flex; flex-direction: column; align-items: center; justify-content: center; gap: 6px; margin-bottom: 12px; padding-bottom: 1px; }
.burger i { width: 33px; height: 3px; border-radius: 2px; background: #888; }
.panel { height: 600px; flex: none; border: 1px solid #66665c; background: #fbf8d0; padding: 11px 45px 0; display: flex; flex-direction: column; }
.next { flex: 1; background: #fbf8d0; }
h2 { margin: 0 0 0 -1px; height: 42px; font-size: 27px; line-height: 35px; font-weight: normal; color: #d2231f; white-space: nowrap; }
.dash { height: 1px; background: repeating-linear-gradient(90deg, #c3332b 0 3px, transparent 3px 5px); }
.back { align-self: flex-end; margin-top: 15px; font-size: 19.500px; line-height: 26px; font-weight: bold; color: #0b00dd; }
h3 { margin: 2px 0 3px -1px; font-size: 21px; line-height: 30px; color: #12739f; white-space: nowrap; }
ul { list-style: none; margin: 0; padding: 0 0 0 41px; font-size: 18px; line-height: 26px; font-weight: bold; color: #000; }
li { display: flex; margin-bottom: 4px; }
li::before { content: ""; width: 6px; height: 6px; background: #333; margin: 10px 13px 0 0; flex: none; }
li span { display: block; white-space: nowrap; }
.under span { text-decoration: underline; text-underline-offset: 2px; text-decoration-thickness: 1px; }

.scroll { flex: none; display: flex; flex-direction: column; align-items: center; }
.scroll svg { fill: #8a8a8a; }
.chrome .scroll { width: 24px; background: #ededed; padding: 11px 0 9px; }
.chrome .scroll svg { width: 12px; height: 6px; }
.chrome .scroll .down { fill: #4c4c4c; margin-top: auto; }
.chrome .thumb { width: 21px; height: 662px; margin-top: 9px; background: linear-gradient(90deg, #b9b9b9, #aaa); }
.edge .scroll { width: 23px; background: #fcfcfc; padding: 7px 0 6px; }
.edge .scroll svg { width: 14px; height: 10px; }
.edge .scroll .down { margin-top: auto; }
.edge .thumb { width: 13px; height: 588px; margin-top: 44px; border-radius: 7px; background: #8b8b8b; }
.shade { position: absolute; top: 0; right: 0; width: 44px; height: 100%; background: linear-gradient(90deg, rgba(0,0,0,0), rgba(0,0,0,.03) 50%, rgba(0,0,0,.15)); }
.status { position: absolute; left: -1px; bottom: -1px; width: 622px; height: 34px; background: #cdcdcd; border-radius: 0 6px 0 0; padding: 2px 0 0 8px; display: flex; align-items: center; color: #111; }

.side { width: 81px; flex: none; border-left: 1px solid #bcbcbc; display: flex; flex-direction: column; padding: 3px 0; }
.side > div { height: 60px; flex: none; display: grid; place-items: center; padding-left: 2px; }
.side > .add { height: 70px; padding: 0; }
.side > .rule { margin: auto 18px 2px 20px; height: 2px; background: #bcbcbc; }

.task { height: 70px; display: flex; align-items: center; background: #212121; color: #fff; }
.weather { width: 542px; padding-left: 28px; display: flex; align-items: center; gap: 12px; flex: none; }
.weather > svg { margin-bottom: 6px; }
.weather > div { display: flex; flex-direction: column; padding-bottom: 6px; }
.weather > div > svg { height: 24px; }
.dim { color: #cfcfcf; }
.start { margin-right: 22px; }
.start, .find { margin-bottom: 2px; }
.find { width: 326px; height: 44px; flex: none; border-radius: 22px; background: #f2f2f2; color: #666; display: flex; align-items: center; padding: 0 7px 0 16px; }
.find > :nth-child(2) { margin-left: 14px; }
.find > :last-child { margin-left: auto; }
.apps { display: grid; grid-template-columns: repeat(7, 60px); gap: 6px; margin: 0 0 2px 8px; }
.apps > div { position: relative; height: 60px; border-radius: 6px; display: grid; place-items: center; }
.apps i { position: absolute; bottom: 1px; left: 25px; width: 10px; height: 5px; border-radius: 3px; background: #9a9a9a; }
.apps .on { background: #303033; box-shadow: inset 0 0 0 1px #3a3a3d; }
.apps .on i { left: 18px; width: 24px; background: #4cb8f2; }
.apps .snip { background: #472728; }
.apps .snip i { background: #f795a0; }
.tray { margin-left: auto; display: flex; align-items: center; padding-right: 29px; }
.tl { fill: none; stroke: #fff; stroke-width: 1.800; }
.tray > svg { margin-bottom: 2px; }
.lang { display: flex; flex-direction: column; align-items: center; width: 34px; margin: 0 27px 0 32px; padding-bottom: 2px; }
.lang svg { height: 23px; }
.clock svg { height: 24px; }
.tray > svg + svg { margin-left: 10px; }
.clock { display: flex; flex-direction: column; align-items: flex-end; margin-left: 24px; padding-bottom: 6px; }

.ink { position: absolute; left: 0; top: 0; fill: none; stroke: #e81f27; stroke-width: 5; stroke-linecap: round; stroke-linejoin: round; pointer-events: none; }
</style>
